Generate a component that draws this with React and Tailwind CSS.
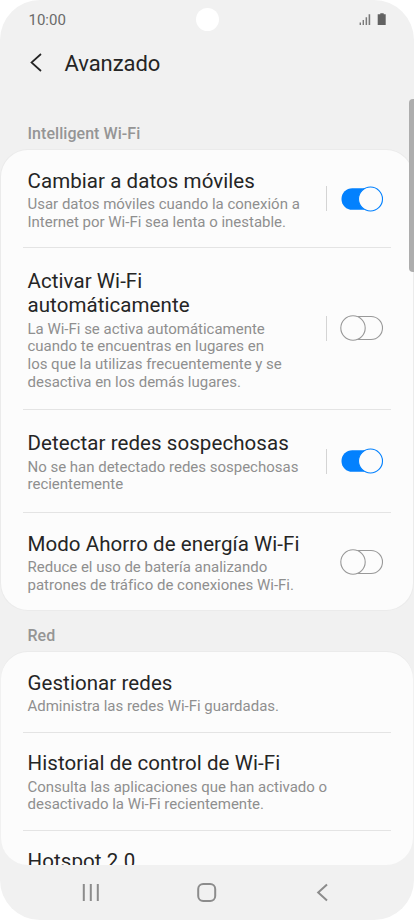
import clsx from "clsx";

const wifiRows = [
  {
    title: ["Cambiar a datos móviles"],
    text: ["Usar datos móviles cuando la conexión a", "Internet por Wi-Fi sea lenta o inestable."],
    box: "h-[98px] pt-[18.5px]",
    toggle: "mt-[37px]",
    on: true,
    separator: true,
  },
  {
    title: ["Activar Wi-Fi", "automáticamente"],
    text: [
      "La Wi-Fi se activa automáticamente",
      "cuando te encuentras en lugares en",
      "los que la utilizas frecuentemente y se",
      "desactiva en los demás lugares.",
    ],
    box: "h-[162px] pt-[21px]",
    toggle: "mt-[66px]",
    separator: true,
  },
  {
    title: ["Detectar redes sospechosas"],
    text: ["No se han detectado redes sospechosas", "recientemente"],
    box: "h-[103px] pt-[21px]",
    toggle: "mt-[37px]",
    on: true,
    separator: true,
  },
  {
    title: ["Modo Ahorro de energía Wi-Fi"],
    text: ["Reduce el uso de batería analizando", "patrones de tráfico de conexiones Wi-Fi."],
    box: "h-[97px] pt-[18.5px]",
    toggle: "mt-[37px]",
  },
];

const networkRows = [
  {
    title: ["Gestionar redes"],
    text: ["Administra las redes Wi-Fi guardadas."],
    box: "h-[81px] pt-[18.5px]",
  },
  {
    title: ["Historial de control de Wi-Fi"],
    text: ["Consulta las aplicaciones que han activado o", "desactivado la Wi-Fi recientemente."],
    box: "h-[98px] pt-[18px]",
  },
  {
    title: ["Hotspot 2.0"],
    text: [],
    box: "h-[60px] pt-[18px]",
  },
];

function Toggle({ on }) {
  if (on) {
    return (
      <svg width="44" height="28" viewBox="0 0 44 28" fill="none">
        <rect x="1.5" y="3.2" width="40" height="21.6" rx="10.8" fill="#0381fe" />
        <circle cx="30.5" cy="14" r="12" fill="#fcfcfc" stroke="#0381fe" strokeWidth="1.1" />
      </svg>
    );
  }
  return (
    <svg width="44" height="28" viewBox="0 0 44 28" fill="none" stroke="#999999" strokeWidth="1.1">
      <rect x="1.5" y="2.5" width="41" height="23" rx="11.5" />
      <circle cx="13" cy="14" r="12.2" fill="#fcfcfc" />
    </svg>
  );
}

function Row({ title, text, box, toggle, on, separator, last }) {
  return (
    <div className={clsx("relative flex shrink-0 justify-between pl-[26.5px] pr-[29px]", box)}>
      <div className="whitespace-nowrap">
        {title.map((line) => (
          <div key={line} className="text-[20.5px] leading-6 tracking-[0.07px] text-[#252525]">
            {line}
          </div>
        ))}
        <div className="mt-[3.5px] text-[15px] leading-[17.7px] tracking-[-0.01px] text-[#8f8f8f]">
          {text.map((line) => (
            <div key={line}>{line}</div>
          ))}
        </div>
      </div>
      {toggle && (
        <div className="-mt-[21px] flex items-start">
          <div className={clsx("flex items-center gap-[13px]", toggle)}>
            {separator && <div className="h-[25px] w-px bg-[#d4d4d4]" />}
            <Toggle on={on} />
          </div>
        </div>
      )}
      {!last && <div className="absolute bottom-0 left-[22px] right-[22px] h-px bg-[#e4e4e4]" />}
    </div>
  );
}

function Card({ rows, className }) {
  return (
    <section className={clsx("mx-px flex flex-col overflow-hidden bg-[#fcfcfc]", className)}>
      {rows.map((row, i) => (
        <Row key={row.title[0]} {...row} last={i === rows.length - 1} />
      ))}
    </section>
  );
}

export default function App() {
  return (
    <div className="h-[920px] w-[414px] overflow-hidden bg-white font-['Roboto',sans-serif]">
      <div className="relative flex h-full flex-col overflow-hidden rounded-[40px] bg-[#f1f1f1]">
        <header className="relative flex h-10 shrink-0 items-center justify-between pl-[28.5px] pr-[27px]">
          <span className="text-[15px] text-[#6a6a6a]">10:00</span>
          <div className="absolute left-[195.5px] top-[7.5px] size-[23px] rounded-full bg-white" />
          <svg width="28" height="14" viewBox="0 0 28 14">
            <path d="M.6 9.500h1.400V12H.6zM3.600 7H5v5H3.600zM6.600 4.200h1.500V12H6.600zM9.600 1.200h1.600V12H9.600z" fill="#7a7a7a" />
            <path d="M21.300.2h3.400v1h2V12h-8V1.200h2.600z" fill="#626262" />
          </svg>
        </header>
        <div className="flex h-[46px] shrink-0 items-center pl-7">
          <svg width="16" height="20" viewBox="0 0 16 20" fill="none" stroke="#252525" strokeWidth="1.700">
            <path d="M13 1 3.500 9.500 13 18" />
          </svg>
          <h1 className="ml-[20.5px] text-[22px] tracking-[-0.06px] text-[#252525]">Avanzado</h1>
        </div>
        <h2 className="mt-[37px] h-[27px] shrink-0 pl-[27.5px] text-[16px] font-medium leading-[22px] tracking-[0.05px] text-[#959595]">
          Intelligent Wi-Fi
        </h2>
        <Card rows={wifiRows} className="h-[460px] shrink-0 rounded-[27px] shadow-[0_0_0_1px_#ebebeb]" />
        <h2 className="h-[42px] shrink-0 pl-[27.5px] pt-[15px] text-[16px] font-medium leading-[22px] text-[#959595]">Red</h2>
        <Card rows={networkRows} className="h-[213px] shrink-0 rounded-[27px] shadow-[0_-1px_0_0_#ebebeb]" />
        <nav className="flex h-[55px] shrink-0 items-center justify-between pl-[81px] pr-[81px]">
          <svg width="20" height="20" viewBox="0 0 20 20" stroke="#8c8c8c" strokeWidth="2">
            <path d="M2.800 1v17M9.800 1v17M16.800 1v17" />
          </svg>
          <svg width="20" height="20" viewBox="0 0 20 20" fill="none" stroke="#8c8c8c" strokeWidth="2">
            <rect x="1.200" y="1" width="17" height="17" rx="5" />
          </svg>
          <svg width="20" height="20" viewBox="0 0 20 20" fill="none" stroke="#8c8c8c" strokeWidth="2">
            <path d="m14 1.500-8.800 8 8.800 8" />
          </svg>
        </nav>
        <div className="absolute right-0 top-[99px] h-[173px] w-[5px] rounded-l-[4px] bg-[#adadad]" />
      </div>
    </div>
  );
}
